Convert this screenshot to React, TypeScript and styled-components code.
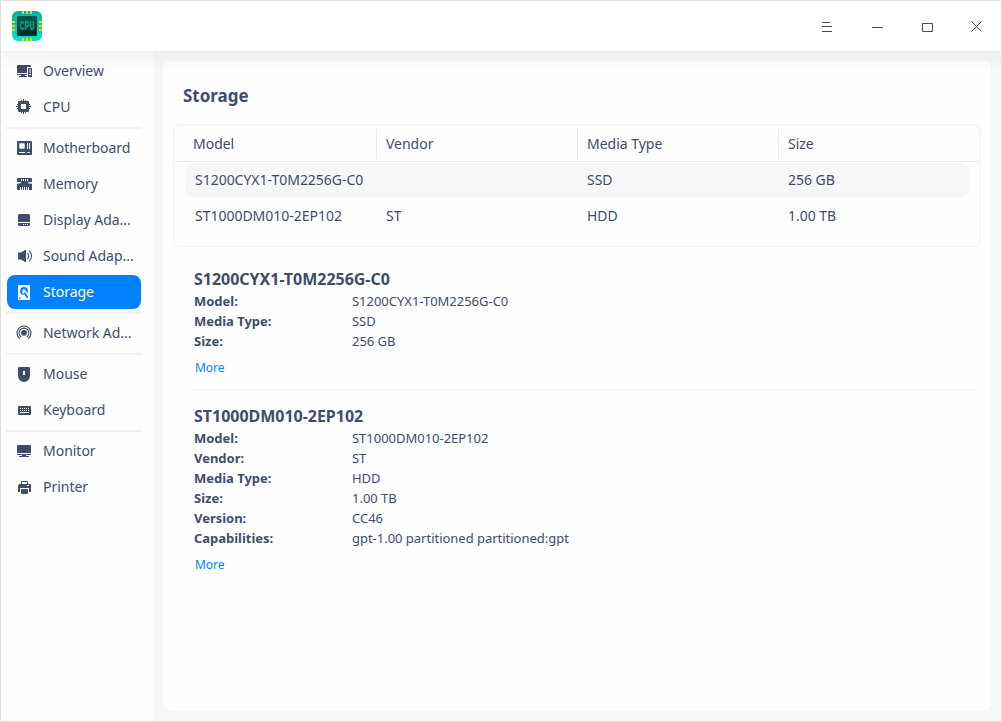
import React from "react";
import styled, { createGlobalStyle, css } from "styled-components";

const ink = "#414d68";
const accent = "#0081ff";

const GlobalStyle = createGlobalStyle`
  * { box-sizing: border-box; }
  body {
    margin: 0;
    background: #fff;
    color: ${ink};
    font-family: "Noto Sans", sans-serif;
    font-size: 14px;
    letter-spacing: -0.02px;
  }
`;

const Window = styled.div`
  width: 1002px;
  height: 722px;
  border: 1px solid #dedede;
  background: #fefefe;
  display: flex;
  flex-direction: column;
  overflow: hidden;
`;

const TitleBar = styled.header`
  height: 50px;
  flex: none;
  display: flex;
  align-items: center;
  justify-content: space-between;
  padding-left: 11px;
  background: #fff;
`;

const Controls = styled.div`
  display: flex;
`;

const ControlButton = styled.button`
  width: 50px;
  height: 50px;
  padding: 0;
  border: 0;
  background: none;
  color: ${ink};
  svg { display: block; }
`;

const Body = styled.div`
  flex: 1;
  display: flex;
  min-height: 0;
  position: relative;
  &::after {
    content: "";
    position: absolute;
    inset: 0 0 auto 0;
    height: 20px;
    background: linear-gradient(rgba(0, 0, 0, 0.035), rgba(0, 0, 0, 0));
    pointer-events: none;
  }
`;

const Sidebar = styled.nav`
  width: 152px;
  flex: none;
  padding: 3px 11px 0 5px;
  display: flex;
  flex-direction: column;
  gap: 2px;
`;

const Separator = styled.div`
  height: 2px;
  margin-top: 1px;
  background: #f2f2f2;
  flex: none;
`;

const NavItem = styled.a<{ $active?: boolean }>`
  height: 34px;
  margin: 0 1px;
  padding-left: 8px;
  display: flex;
  align-items: center;
  gap: 10px;
  border-radius: 8px;
  line-height: 20px;
  white-space: nowrap;
  ${(p) => p.$active && css`
    background: ${accent};
    color: #fff;
  `}
  svg { display: block; flex: none; }
`;

const Main = styled.main`
  flex: 1;
  padding: 10px;
  background: #f7f7f7;
`;

const Card = styled.section`
  height: 650px;
  background: #fefefe;
  border-radius: 8px;
  padding: 23px 10px 0;
`;

const PageTitle = styled.h1`
  margin: 0 0 16px 10px;
  font-size: 17px;
  line-height: 24px;
  font-weight: 700;
`;

const Table = styled.div`
  height: 123px;
  border: 1px solid #f2f2f2;
  border-radius: 8px;
  padding: 0 1px;
`;

const TableHead = styled.div`
  height: 37px;
  display: grid;
  grid-template-columns: 201px 201px 201px 1fr;
  border-bottom: 1px solid #ebebeb;
  padding-top: 4px;
`;

const HeadCell = styled.div`
  height: 30px;
  line-height: 29px;
  padding-left: 9px;
  border-left: 1px solid #e9e9e9;
  &:first-child { border-left: 0; padding-left: 18px; }
`;

const TableRow = styled.div<{ $shaded?: boolean }>`
  height: 34px;
  margin: 1px 10px 2px;
  display: grid;
  grid-template-columns: 191px 201px 201px 1fr;
  padding-left: 10px;
  border-radius: 8px;
  line-height: 34px;
  background: ${(p) => (p.$shaded ? "#f7f7f7" : "transparent")};
`;

const Device = styled.article`
  margin: 0 6px 0 20px;
  padding: 21px 0 11px 1px;
  & + & {
    padding-top: 15px;
    border-top: 1px solid #f2f2f2;
  }
`;

const DeviceName = styled.h2`
  margin: 0;
  font-size: 16px;
  line-height: 23px;
  font-weight: 700;
`;

const Field = styled.div`
  display: grid;
  grid-template-columns: 158px 1fr;
  font-size: 13px;
  line-height: 20px;
`;

const Label = styled.span`
  font-weight: 700;
`;

const More = styled.a`
  display: block;
  margin: 7px 0 0 1px;
  font-size: 12px;
  line-height: 20px;
  color: #0082fa;
`;

const Logo = () => (
  <svg width="30" height="30" viewBox="0 0 30 30">
    <defs>
      <linearGradient id="shell" x1="0" y1="0" x2="0" y2="1">
        <stop offset="0" stopColor="#00b3a2" />
        <stop offset="1" stopColor="#00e5cb" />
      </linearGradient>
      <linearGradient id="chip" x1="0" y1="0" x2="0" y2="1">
        <stop offset="0" stopColor="#005c50" />
        <stop offset="1" stopColor="#00251f" />
      </linearGradient>
    </defs>
    <rect width="30" height="30" rx="6" fill="url(#shell)" />
    <path
      d="M11 0v3M15 0v3M19 0v3M11 27v3M15 27v3M19 27v3M0 11h3M0 15h3M0 19h3M27 11h3M27 15h3M27 19h3"
      stroke="#ffcf00"
      strokeWidth="2"
    />
    <rect x="5" y="5" width="20" height="20" rx="1" fill="url(#chip)" />
    <text
      x="7.6"
      y="18.8"
      fontFamily="Liberation Mono, monospace"
      fontSize="13"
      fontWeight="700"
      textLength="15"
      lengthAdjust="spacingAndGlyphs"
      fill="#00a894"
    >
      CPU
    </text>
  </svg>
);

type IconName =
  | "overview" | "cpu" | "board" | "memory" | "display" | "sound"
  | "storage" | "network" | "mouse" | "keyboard" | "monitor" | "printer";

const shapes: Record<IconName, React.ReactNode> = {
  overview: (
    <>
      <path d="M3 3h12a1 1 0 0 1 1 1v1h-3.500a.5.5 0 0 0-.5.5V11H2V4a1 1 0 0 1 1-1zM2 12h10v1H2zM6 13h4v1H6zM4 14h8v1H4z" />
      <path fillRule="evenodd" d="M13.600 6H16.400a.6.6 0 0 1 .6.6V15h-4V6.600a.6.6 0 0 1 .6-.6zM14 7.500v1h2v-1zm0 2v1h2v-1zm0 2.500v1h2v-1z" />
    </>
  ),
  cpu: (
    <>
      <path fillRule="evenodd" d="M4 3h9a1 1 0 0 1 1 1v9a1 1 0 0 1-1 1H4a1 1 0 0 1-1-1V4a1 1 0 0 1 1-1zM6.500 6a.5.5 0 0 0-.5.5v4a.5.5 0 0 0 .5.5h4a.5.5 0 0 0 .5-.5v-4a.5.5 0 0 0-.5-.5z" />
      <path
        d="M6.500 2v1M8.500 1v2M10.500 2v1M6.500 14v1M8.500 14v2M10.500 14v1M2 6.500h1M1 8.500h2M2 10.500h1M14 6.500h1M14 8.500h2M14 10.500h1"
        stroke="currentColor"
      />
    </>
  ),
  board: (
    <path fillRule="evenodd" d="M3 2h13a1 1 0 0 1 1 1v12a1 1 0 0 1-1 1H3a1 1 0 0 1-1-1V3a1 1 0 0 1 1-1zM5 4.300a.7.7 0 0 0-.7.7v4a.7.7 0 0 0 .7.7h4a.7.7 0 0 0 .7-.7V5a.7.7 0 0 0-.7-.7zM12 4v6h1V4zm2 0v6h1V4zM4 13v1h6v-1zm8 0v1h3v-1z" />
  ),
  memory: (
    <path fillRule="evenodd" d="M3 3h13a1 1 0 0 1 1 1v3l-4 .3v.9l4 .5V15H2V8.700l4-.5v-.9L2 7V4a1 1 0 0 1 1-1zM6 4v2h1V4zm2 0v2h1V4zm2 0v2h1V4zm2 0v2h1V4zM5 12v3h1v-3zm2 0v3h1v-3zm2 0v3h1v-3zm2 0v3h1v-3zm2 0v3h1v-3z" />
  ),
  display: (
    <path fillRule="evenodd" d="M4.500 3h9A1.500 1.500 0 0 1 15 4.500V11H3V4.500A1.500 1.500 0 0 1 4.500 3zM3 12h12v1.700A1.300 1.300 0 0 1 13.700 15H4.300A1.300 1.300 0 0 1 3 13.700zM8 13v1h1v-1zm2 0v1h1v-1zm2 0v1h1v-1z" />
  ),
  sound: (
    <>
      <path d="M3 5.500h3L10 3h1v12h-1l-4-2.500H3z" />
      <path d="M12.300 6c1.700 1.500 1.700 4.500 0 6M14 3.600c3.300 2.700 3.300 8.100 0 10.800" fill="none" stroke="currentColor" strokeWidth="1.100" />
    </>
  ),
  storage: (
    <>
      <rect x="3" y="2" width="12" height="15" rx="1" />
      <circle cx="9" cy="8" r="2.800" fill="none" stroke={accent} strokeWidth="2.300" />
      <path d="M8.500 8.500 14 14.500" stroke="currentColor" strokeWidth="3.600" />
      <path d="M9.300 9.800 12.800 14.600" stroke={accent} strokeWidth="1.900" />
      <path d="M4 14.500h1.500V16H4z" fill={accent} />
    </>
  ),
  network: (
    <>
      <circle cx="9" cy="8.800" r="2.900" />
      <path d="M6.200 13A4.900 4.900 0 1 1 11.800 13M4.800 14.600A7 7 0 1 1 13.200 14.600" fill="none" stroke="currentColor" strokeWidth="1.100" />
    </>
  ),
  mouse: (
    <path fillRule="evenodd" d="M4.200 2h9.600A1.200 1.200 0 0 1 15 3.200V11a6 6 0 0 1-12 0V3.200A1.200 1.200 0 0 1 4.200 2zM8 6v4h2V6z" />
  ),
  keyboard: (
    <path fillRule="evenodd" d="M4 5h11a1 1 0 0 1 1 1v7a1 1 0 0 1-1 1H4a1 1 0 0 1-1-1V6a1 1 0 0 1 1-1zM5 7v1h1V7zm2 0v1h1V7zm2 0v1h1V7zm2 0v1h1V7zm2 0v1h1V7zM5 9v1h1V9zm2 0v1h1V9zm2 0v1h1V9zm2 0v1h1V9zm2 0v1h1V9zM5 11v1h9v-1z" />
  ),
  monitor: (
    <path d="M3 3h12a1 1 0 0 1 1 1v7H2V4a1 1 0 0 1 1-1zM2 12h14v1H2zM7 13h4v1H7zM4 14h10v1H4z" />
  ),
  printer: (
    <path fillRule="evenodd" d="M7 3h5a1 1 0 0 1 1 1v2h2a1 1 0 0 1 1 1v7h-2v-4H5v4H3V8a2 2 0 0 1 2-2h1V4a1 1 0 0 1 1-1zM7 4v2h5V4zm5 3v1h2V7zM6 11h7v4a1 1 0 0 1-1 1H7a1 1 0 0 1-1-1z" />
  ),
};

const NavIcon = ({ name }: { name: IconName }) => (
  <svg width="18" height="18" viewBox="0 0 18 18" fill="currentColor">
    {shapes[name]}
  </svg>
);

const groups: [IconName, string][][] = [
  [["overview", "Overview"], ["cpu", "CPU"]],
  [
    ["board", "Motherboard"],
    ["memory", "Memory"],
    ["display", "Display Ada..."],
    ["sound", "Sound Adap..."],
    ["storage", "Storage"],
  ],
  [["network", "Network Ad..."]],
  [["mouse", "Mouse"], ["keyboard", "Keyboard"]],
  [["monitor", "Monitor"], ["printer", "Printer"]],
];

const controls = [
  "M21 21.500h8M21 25.500h10M21 30.500h10",
  "M21 26.500h11",
  "M21.500 22.500h10v8h-10z",
  "M20.500 20.500l10 10M30.500 20.500l-10 10",
];

const columns = ["Model", "Vendor", "Media Type", "Size"];
const rows = [
  ["S1200CYX1-T0M2256G-C0", "", "SSD", "256 GB"],
  ["ST1000DM010-2EP102", "ST", "HDD", "1.00 TB"],
];

const devices = [
  {
    name: "S1200CYX1-T0M2256G-C0",
    fields: [
      ["Model:", "S1200CYX1-T0M2256G-C0"],
      ["Media Type:", "SSD"],
      ["Size:", "256 GB"],
    ],
  },
  {
    name: "ST1000DM010-2EP102",
    fields: [
      ["Model:", "ST1000DM010-2EP102"],
      ["Vendor:", "ST"],
      ["Media Type:", "HDD"],
      ["Size:", "1.00 TB"],
      ["Version:", "CC46"],
      ["Capabilities:", "gpt-1.00 partitioned partitioned:gpt"],
    ],
  },
];

export default function App() {
  return (
    <Window>
      <GlobalStyle />
      <TitleBar>
        <Logo />
        <Controls>
          {controls.map((d) => (
            <ControlButton key={d}>
              <svg width="50" height="50" viewBox="0 0 50 50" fill="none" stroke="currentColor">
                <path d={d} />
              </svg>
            </ControlButton>
          ))}
        </Controls>
      </TitleBar>
      <Body>
        <Sidebar>
          {groups.map((group, i) => (
            <React.Fragment key={i}>
              {i > 0 && <Separator />}
              {group.map(([icon, label]) => (
                <NavItem key={icon} $active={icon === "storage"}>
                  <NavIcon name={icon} />
                  {label}
                </NavItem>
              ))}
            </React.Fragment>
          ))}
        </Sidebar>
        <Main>
          <Card>
            <PageTitle>Storage</PageTitle>
            <Table>
              <TableHead>
                {columns.map((c) => (
                  <HeadCell key={c}>{c}</HeadCell>
                ))}
              </TableHead>
              {rows.map((row, i) => (
                <TableRow key={row[0]} $shaded={i === 0}>
                  {row.map((cell, j) => (
                    <span key={j}>{cell}</span>
                  ))}
                </TableRow>
              ))}
            </Table>
            {devices.map((device) => (
              <Device key={device.name}>
                <DeviceName>{device.name}</DeviceName>
                {device.fields.map(([label, value]) => (
                  <Field key={label}>
                    <Label>{label}</Label>
                    <span>{value}</span>
                  </Field>
                ))}
                <More>More</More>
              </Device>
            ))}
          </Card>
        </Main>
      </Body>
    </Window>
  );
}
